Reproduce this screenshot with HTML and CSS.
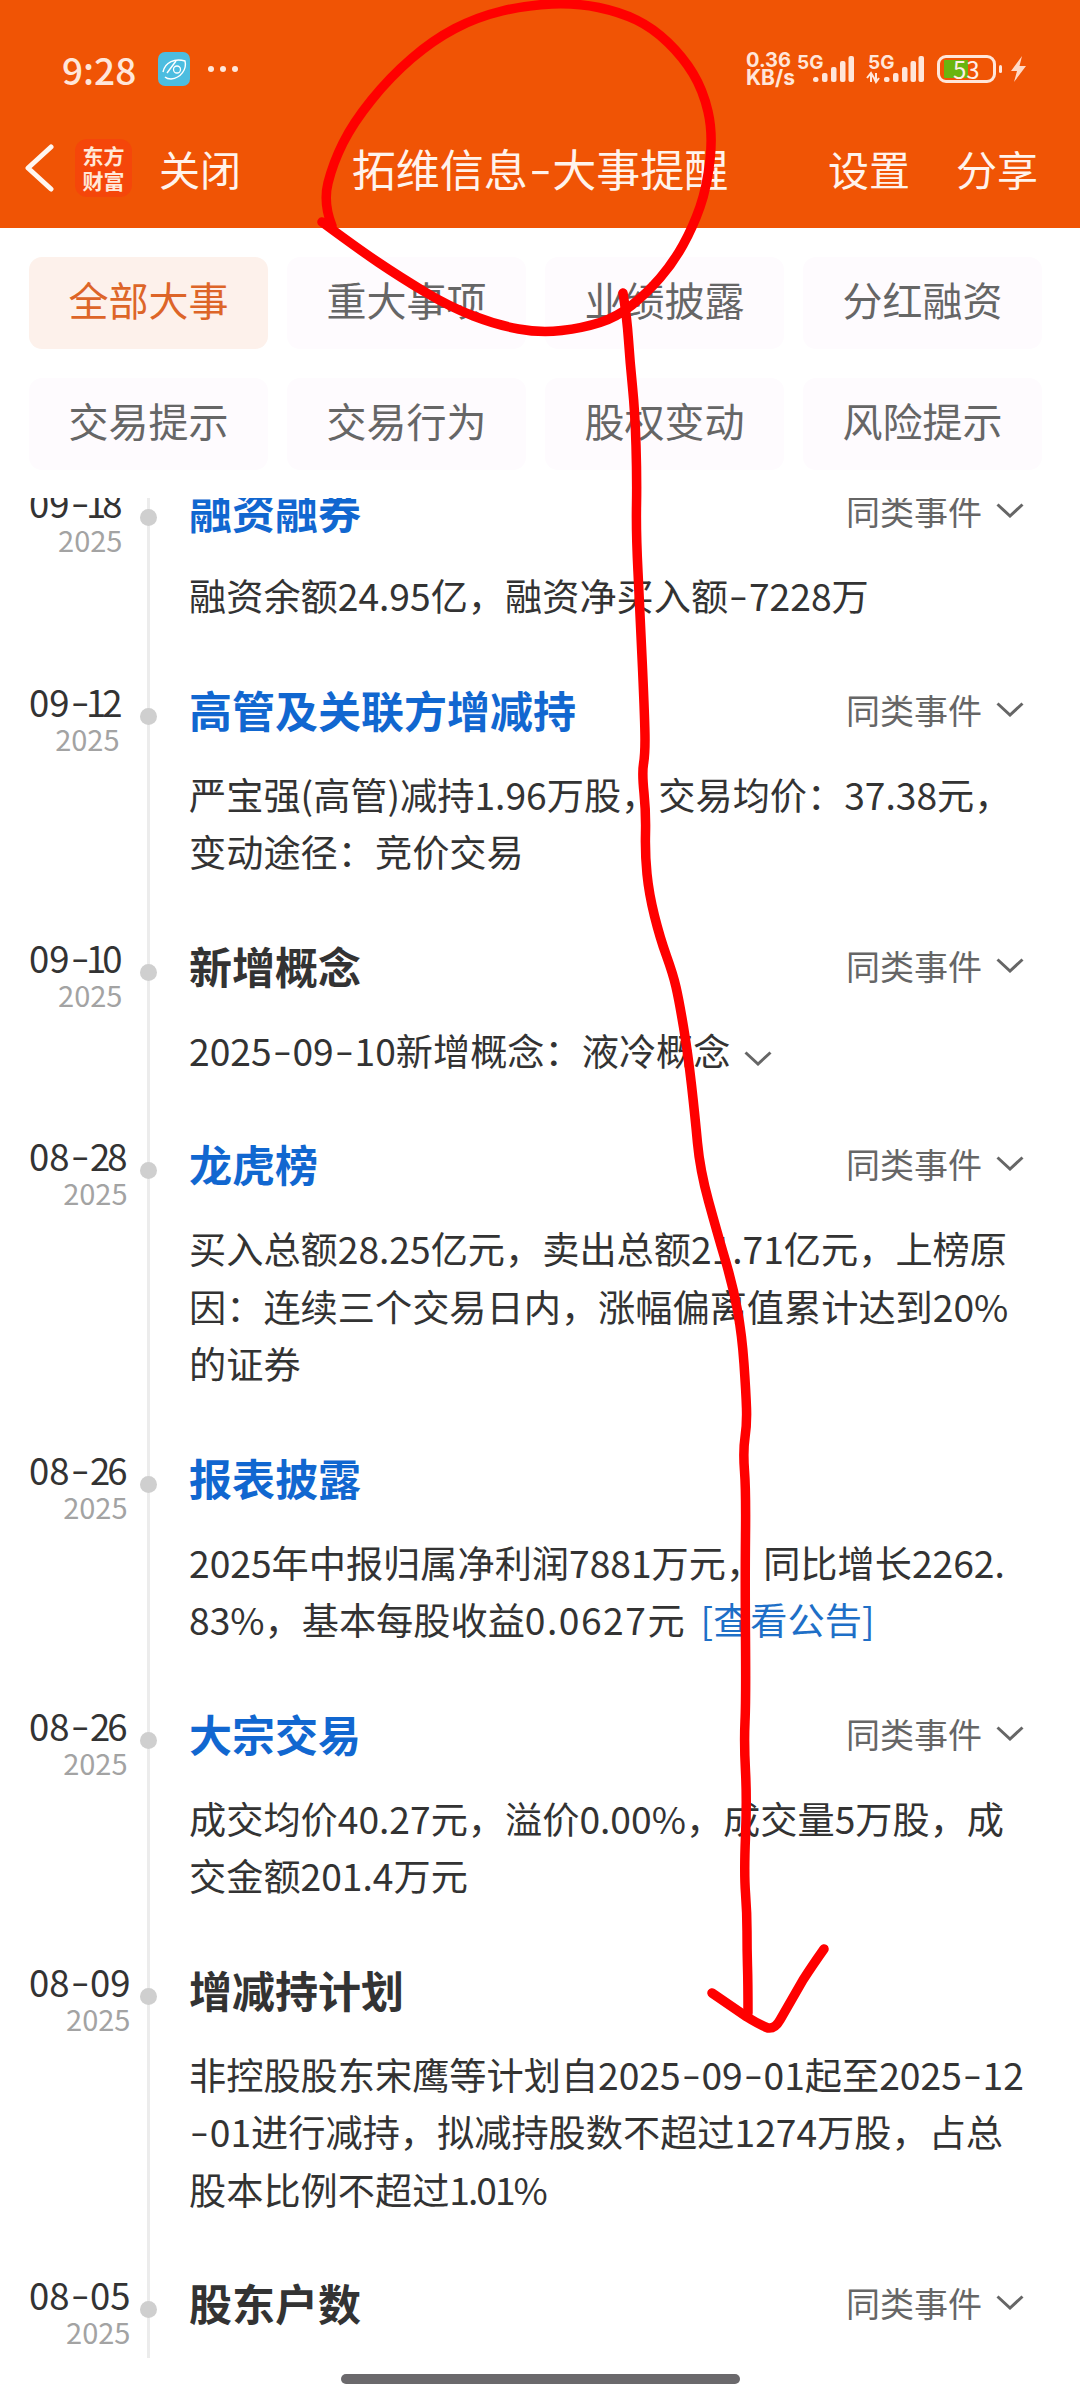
FILE: index.html
```html
<!DOCTYPE html>
<html lang="zh-CN">
<head>
<meta charset="utf-8">
<title>拓维信息-大事提醒</title>
<link rel="stylesheet" href="styles.css">
</head>
<body>
<div class="page">
  <header class="header">
    <div class="status">
      <span class="time">9:28</span>
      <svg class="app-icon" viewBox="0 0 32 34" width="32" height="34">
        <rect width="32" height="34" rx="7" fill="#4cbde0"/>
        <path d="M5 20C7 10 17 6 27 9C29 17 23 26 13 27C10 27 8 26 7 25" fill="none" stroke="#fff" stroke-width="1.4"/>
        <path d="M9 21L18 9" fill="none" stroke="#fff" stroke-width="1.4"/>
        <circle cx="19" cy="17.500" r="3.500" fill="none" stroke="#fff" stroke-width="1.300"/>
      </svg>
      <span class="more"><i></i><i></i><i></i></span>
      <div class="status-right">
        <span class="speed"><b>0.36</b><b class="unit">KB/s</b></span>
        <svg class="signal" viewBox="0 0 57 30" width="57" height="30">
          <text x="0" y="15" class="sig-label">5G</text>
          <rect x="16" y="23" width="5.500" height="5" rx="2.500"/>
          <rect x="25" y="19" width="5.500" height="9" rx="2"/>
          <rect x="34" y="13" width="5.500" height="15" rx="2"/>
          <rect x="43" y="7" width="5.500" height="21" rx="2"/>
          <rect x="51.500" y="2" width="5.500" height="26" rx="2"/>
        </svg>
        <svg class="signal" viewBox="0 0 57 30" width="57" height="30">
          <text x="1" y="15" class="sig-label">5G</text>
          <path d="M4 19V28M0 24L4 19L7 24M9 19V28M7 24L9 28L12 24" fill="none" stroke="#ffe6da" stroke-width="2"/>
          <rect x="17" y="23" width="5.500" height="5" rx="2"/>
          <rect x="26" y="19" width="5.500" height="9" rx="2"/>
          <rect x="35" y="13" width="5.500" height="15" rx="2"/>
          <rect x="43.500" y="7" width="5.500" height="21" rx="2"/>
          <rect x="51.500" y="2" width="5.500" height="26" rx="2"/>
        </svg>
        <span class="battery"><span class="battery-fill"></span><span class="battery-num">53</span></span>
        <span class="battery-nub"></span>
        <svg class="bolt" viewBox="0 0 16 26" width="16" height="26"><path d="M12 0L1 15H7L4 26L16 10H9.500Z" fill="#ffd9c6"/></svg>
      </div>
    </div>
    <nav class="nav">
      <div class="nav-left">
        <svg class="back" viewBox="0 0 30 48" width="30" height="48"><path d="M27 3L4 24L27 45" fill="none" stroke="#fff6f0" stroke-width="5" stroke-linecap="round" stroke-linejoin="round"/></svg>
        <span class="logo">东方<br>财富</span>
        <span class="close">关闭</span>
      </div>
      <h1 class="title">拓维信息<span class="dash">-</span>大事提醒</h1>
      <div class="nav-right">
        <span class="action">设置</span>
        <span class="action">分享</span>
      </div>
    </nav>
  </header>

  <section class="tabs">
    <div class="tab active">全部大事</div>
    <div class="tab">重大事项</div>
    <div class="tab">业绩披露</div>
    <div class="tab">分红融资</div>
    <div class="tab">交易提示</div>
    <div class="tab">交易行为</div>
    <div class="tab">股权变动</div>
    <div class="tab">风险提示</div>
  </section>

  <main class="viewport">
    <div class="list">
      <article class="row">
        <div class="when"><div class="date">09<span class="dash">-</span><span class="d1">1</span>8</div><div class="year">2025</div></div>
        <span class="dot"></span>
        <div class="body">
          <div class="head"><h2 class="name link">融资融券</h2><span class="same">同类事件<svg class="chev" viewBox="0 0 28 15" width="28" height="15"><path d="M1.500 1.500L14 13L26.500 1.500"/></svg></span></div>
          <p class="text">融资余额24.95亿，融资净买入额<span class="dash">-</span>7228万</p>
        </div>
      </article>
      <article class="row">
        <div class="when"><div class="date">09<span class="dash">-</span><span class="d1">1</span><span class="d2">2</span></div><div class="year">2025</div></div>
        <span class="dot"></span>
        <div class="body">
          <div class="head"><h2 class="name link">高管及关联方增减持</h2><span class="same">同类事件<svg class="chev" viewBox="0 0 28 15" width="28" height="15"><path d="M1.500 1.500L14 13L26.500 1.500"/></svg></span></div>
          <p class="text">严宝强(高管)减持1.96万股，交易均价：37.38元，变动途径：竞价交易</p>
        </div>
      </article>
      <article class="row">
        <div class="when"><div class="date">09<span class="dash">-</span><span class="d1">1</span>0</div><div class="year">2025</div></div>
        <span class="dot"></span>
        <div class="body">
          <div class="head"><h2 class="name">新增概念</h2><span class="same">同类事件<svg class="chev" viewBox="0 0 28 15" width="28" height="15"><path d="M1.500 1.500L14 13L26.500 1.500"/></svg></span></div>
          <p class="text">2025<span class="dash">-</span>09<span class="dash">-</span>10新增概念：液冷概念<svg class="chev inline" viewBox="0 0 28 15" width="28" height="15"><path d="M1.500 1.500L14 13L26.500 1.500"/></svg></p>
        </div>
      </article>
      <article class="row">
        <div class="when"><div class="date">08<span class="dash">-</span><span class="d2">2</span>8</div><div class="year">2025</div></div>
        <span class="dot"></span>
        <div class="body">
          <div class="head"><h2 class="name link">龙虎榜</h2><span class="same">同类事件<svg class="chev" viewBox="0 0 28 15" width="28" height="15"><path d="M1.500 1.500L14 13L26.500 1.500"/></svg></span></div>
          <p class="text">买入总额28.25亿元，卖出总额21.71亿元，上榜原因：连续三个交易日内，涨幅偏离值累计达到20%的证券</p>
        </div>
      </article>
      <article class="row">
        <div class="when"><div class="date">08<span class="dash">-</span><span class="d2">2</span>6</div><div class="year">2025</div></div>
        <span class="dot"></span>
        <div class="body">
          <div class="head"><h2 class="name link">报表披露</h2></div>
          <p class="text">2025年中报归属净利润7881万元，同比增长2262.<br>83%，基本每股收益<span class="wide">0.0627</span>元<a class="notice">[查看公告]</a></p>
        </div>
      </article>
      <article class="row">
        <div class="when"><div class="date">08<span class="dash">-</span><span class="d2">2</span>6</div><div class="year">2025</div></div>
        <span class="dot"></span>
        <div class="body">
          <div class="head"><h2 class="name link">大宗交易</h2><span class="same">同类事件<svg class="chev" viewBox="0 0 28 15" width="28" height="15"><path d="M1.500 1.500L14 13L26.500 1.500"/></svg></span></div>
          <p class="text">成交均价40.27元，溢价0.00%，成交量5万股，成交金额201.4万元</p>
        </div>
      </article>
      <article class="row">
        <div class="when"><div class="date">08<span class="dash">-</span>09</div><div class="year">2025</div></div>
        <span class="dot"></span>
        <div class="body">
          <div class="head"><h2 class="name">增减持计划</h2></div>
          <p class="text">非控股股东宋鹰等计划自2025<span class="dash">-</span>09<span class="dash">-</span>01起至2025<span class="dash">-</span>12<br><span class="dash">-</span>01进行减持，拟减持股数不超过1274万股，占总股本比例不超过<span class="tight">1.01%</span></p>
        </div>
      </article>
      <article class="row">
        <div class="when"><div class="date">08<span class="dash">-</span>05</div><div class="year">2025</div></div>
        <span class="dot"></span>
        <div class="body">
          <div class="head"><h2 class="name">股东户数</h2><span class="same">同类事件<svg class="chev" viewBox="0 0 28 15" width="28" height="15"><path d="M1.500 1.500L14 13L26.500 1.500"/></svg></span></div>
        </div>
      </article>
    </div>
  </main>

  <footer class="home"><span class="home-bar"></span></footer>

  <svg class="ink" viewBox="0 0 1080 2400" width="1080" height="2400">
    <path d="M332 226Q323 203 328 183Q333 163 343 143Q353 123 371.500 100Q390 77 411.500 58.500Q433 40 455 28.500Q477 17 502 11Q527 5 552 4Q577 3 598.500 7.500Q620 12 636.500 20Q653 28 668 42.500Q683 57 693 73.500Q703 90 708 111.500Q713 133 710 160Q707 187 700 207Q693 227 683 245Q673 263 660 278Q647 293 632 305Q617 317 600 322.500Q583 328 561.500 330.500Q540 333 518.500 329Q497 325 473.500 316Q450 307 425 292Q400 277 378.500 262.500Q357 248 322 222"/>
    <path d="M623 293Q627 318 628.500 340Q630 362 632.500 387Q635 412 636 445.500Q637 479 636.500 505.500Q636 532 638 572Q640 612 642.500 668Q645 724 645 739.500Q645 755 643.500 764Q642 773 644 793Q646 813 645.500 833.500Q645 854 647 874Q649 894 654.500 916Q660 938 666.500 956Q673 974 676 987Q679 1000 683.500 1027Q688 1054 691.500 1085Q695 1116 697.500 1143Q700 1170 708.500 1201Q717 1232 725 1259Q733 1286 737.500 1310.500Q742 1335 744 1364Q746 1393 746.500 1408.500Q747 1424 745 1437.500Q743 1451 744.500 1471Q746 1491 745.500 1535.500Q745 1580 745.500 1640Q746 1700 745 1721.500Q744 1743 745.500 1771.500Q747 1800 745.500 1836.500Q744 1873 745.500 1893Q747 1913 747 1931.500Q747 1950 747.500 1966.500Q748 1983 748 2013"/>
    <path d="M712 1993L747 2017Q760 2025 768 2028Q775 2029 780 2020L803 1980Q812 1966 824 1949"/>
  </svg>
</div>
</body>
</html>
```
FILE: styles.css
```css
* { box-sizing: border-box; }
html, body { margin: 0; padding: 0; background: #fff; }
body {
  width: 1080px;
  height: 2400px;
  overflow: hidden;
  font-family: "Noto Sans CJK SC", "Noto Sans", sans-serif;
}
.page {
  position: relative;
  display: flex;
  flex-direction: column;
  width: 1080px;
  height: 2400px;
}

/* wider, raised hyphen of the device font */
.dash {
  display: inline-block;
  width: .56em;
  text-align: center;
  transform: translateY(-.05em) scaleX(1.45);
}
/* the device font has proportional digits: narrow 1, slightly narrow 2 */
.d1 { margin-left: -.11em; letter-spacing: -.11em; }
.d2 { letter-spacing: -.08em; }
.wide { letter-spacing: 1.500px; }
.tight { letter-spacing: -2px; }

/* header */
.header { height: 228px; background: #f05405; color: #fff3ec; flex: none; }
.status {
  display: flex;
  align-items: center;
  height: 114px;
  padding: 24px 54px 0 62px;
  color: #ffe6da;
}
.time { font-size: 37px; font-weight: 500; line-height: 1; }
.app-icon { margin-left: 22px; display: block; }
.more { display: flex; gap: 6px; margin-left: 18px; }
.more i { width: 6px; height: 6px; border-radius: 50%; background: #ffe6da; }
.status-right { display: flex; align-items: center; margin-left: auto; }
.speed {
  display: flex;
  flex-direction: column;
  width: 51px;
  font-family: Inter, sans-serif;
  font-size: 20px;
  line-height: 18px;
}
.speed b { font-weight: 700; white-space: nowrap; }
.speed .unit { font-size: 21px; }
.signal { display: block; fill: #ffe6da; margin-right: 13px; overflow: visible; }
.sig-label { font-family: Inter, sans-serif; font-size: 19px; font-weight: 700; }
.battery {
  position: relative;
  width: 59px;
  height: 28px;
  border: 3px solid #ffe6da;
  border-radius: 9px;
}
.battery-fill {
  position: absolute;
  left: 4px;
  top: 2px;
  width: 24px;
  height: 18px;
  background: #69b50f;
}
.battery-num {
  position: absolute;
  left: 13px;
  top: 0;
  font-size: 24px;
  line-height: 22px;
  color: #ffeee6;
}
.battery-nub { width: 3px; height: 8px; margin-left: 3px; border-radius: 2px; background: #ffe6da; }
.bolt { margin-left: 8px; display: block; }

.nav {
  display: grid;
  grid-template-columns: 1fr auto 1fr;
  align-items: center;
  height: 108px;
  padding: 0 24px;
  font-size: 41px;
}
.nav-left { display: flex; align-items: center; }
.nav-right { display: flex; justify-content: flex-end; gap: 46px; padding-right: 18px; }
.back { display: block; flex: none; }
.logo {
  width: 57px;
  height: 58px;
  margin-left: 21px;
  padding-top: 4px;
  border-radius: 12px;
  background: #f5460a;
  color: #ffe8d8;
  font-size: 21px;
  font-weight: 700;
  line-height: 25px;
  text-align: center;
}
.close { margin-left: 27px; }
.title {
  margin: 0;
  font-size: 44px;
  font-weight: 400;
  white-space: nowrap;
}

/* tabs */
.tabs {
  flex: none;
  display: grid;
  grid-template-columns: repeat(4, 239px);
  column-gap: 19px;
  row-gap: 29px;
  grid-auto-rows: 92px;
  height: 270px;
  padding: 29px 0 0 29px;
}
.tab {
  display: flex;
  align-items: center;
  justify-content: center;
  padding-bottom: 8px;
  border-radius: 13px;
  background: #fefbfe;
  color: #666;
  font-size: 40px;
}
.tab.active { background: #fdf1eb; color: #dd6528; }

/* timeline */
.viewport { flex: none; height: 1860px; overflow: hidden; }
.list {
  margin-top: -16px;
  background: linear-gradient(#ececec, #ececec) 147px 0 / 3px 100% no-repeat;
}
.row {
  display: grid;
  grid-template-columns: 111px 17px 1fr;
  padding: 0 50px 56px 29px;
}
.when { justify-self: start; text-align: right; }
.date { font-size: 36.500px; line-height: 42px; color: #333; white-space: nowrap; }
.year { font-size: 29px; line-height: 30px; color: #a3a3a3; }
.dot {
  width: 17px;
  height: 17px;
  margin-top: 27px;
  border-radius: 50%;
  background: #cfcfcf;
}
.body { padding-left: 32px; min-width: 0; }
.head {
  display: flex;
  align-items: center;
  justify-content: space-between;
  height: 57px;
  margin-right: 6px;
}
.name { margin: 0; font-size: 43px; font-weight: 700; line-height: 57px; color: #333; }
.name.link { color: #1167d0; }
.same { display: flex; align-items: center; font-size: 34px; color: #666; white-space: nowrap; }
.chev { display: block; margin-left: 14px; fill: none; stroke: #666; stroke-width: 3; }
.chev.inline { display: inline-block; margin-left: 14px; }
.text {
  margin: 28px 0 0;
  font-size: 37.200px;
  line-height: 57.500px;
  color: #333;
  word-break: break-all;
}
.notice { margin-left: 16px; color: #1e6fc7; }

/* gesture bar */
.home { flex: 1; display: flex; justify-content: center; padding-top: 16px; background: #fff; }
.home-bar { width: 399px; height: 10px; border-radius: 5px; background: #6b696c; }

/* hand-drawn annotation over the screenshot */
.ink {
  position: absolute;
  left: 0;
  top: 0;
  fill: none;
  stroke: #ff0000;
  stroke-width: 9.500;
  stroke-linecap: round;
  stroke-linejoin: round;
  pointer-events: none;
}
```
